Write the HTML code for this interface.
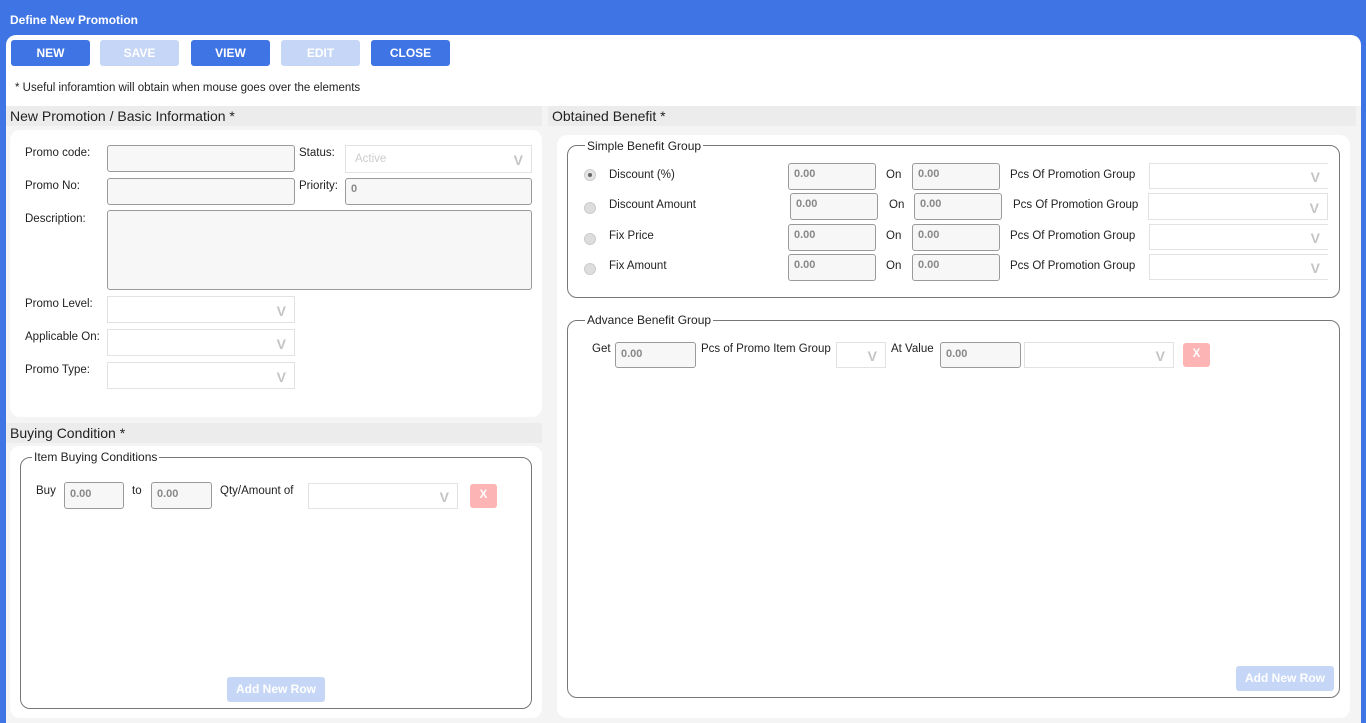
<!DOCTYPE html>
<html><head><meta charset="utf-8"><style>
*{box-sizing:border-box;margin:0;padding:0}
body{width:1366px;height:723px;background:#3f74e5;font-family:"Liberation Sans",sans-serif;font-size:11.5px;color:#222;position:relative;overflow:hidden}
.a{position:absolute}
.title{left:10px;top:13px;color:#fff;font-weight:bold;font-size:12px}
.main{left:6px;top:35px;width:1355px;height:688px;background:#fff;border-radius:10px 10px 0 0}
.gray{left:6px;top:100px;width:1355px;height:623px;background:#f4f4f4}
.btn{height:26px;width:79px;border-radius:3px;background:#3f74e5;color:#fff;font-weight:bold;font-size:12px;text-align:center;line-height:26px}
.dis{background:#c6d6f6}
.hdr{background:#ececec;height:20px;font-size:14px;line-height:20px;padding-left:4px;color:#222}
.panel{background:#fff;border-radius:10px}
.in{background:#f7f7f7;border:1px solid #9a9a9a;border-radius:3px;color:#888;font-weight:bold;font-size:11px;padding:4px 0 0 5px}
.sel{background:#fff;border:1px solid #e2e2e2;}
.sel:after{content:"V";position:absolute;right:8px;top:50%;transform:translateY(-45%);color:#c4c4c4;font-size:14px;font-weight:bold}
.fs{border:1px solid #777;border-radius:10px}
.lg{background:#fff;padding:0 2px;font-size:12px}
.x{background:#fdb4b4;color:#fff;font-weight:bold;border-radius:3px;text-align:center;line-height:23px;width:27px;height:24px}
.radio{width:12px;height:12px;border-radius:50%;background:#ddd;border:1px solid #ccc}
</style></head><body>
<div class="a title">Define New Promotion</div>
<div class="a main"></div>
<div class="a gray"></div>
<div class="a" style="left:6px;top:66px;width:1355px;height:40px;background:#fff"></div>
<div class="a btn" style="left:11px;top:40px">NEW</div>
<div class="a btn dis" style="left:100px;top:40px">SAVE</div>
<div class="a btn" style="left:191px;top:40px">VIEW</div>
<div class="a btn dis" style="left:281px;top:40px">EDIT</div>
<div class="a btn" style="left:371px;top:40px">CLOSE</div>
<div class="a" style="left:15px;top:82px;font-size:11.5px">* Useful inforamtion will obtain when mouse goes over the elements</div>

<div class="a hdr" style="left:6px;top:106px;width:536px">New Promotion / Basic Information *</div>
<div class="a panel" style="left:10px;top:130px;width:532px;height:287px"></div>
<div class="a" style="left:25px;top:147px">Promo code:</div>
<div class="a in" style="left:107px;top:145px;width:188px;height:27px"></div>
<div class="a" style="left:299px;top:147px">Status:</div>
<div class="a sel" style="left:345px;top:145px;width:187px;height:28px;color:#ccc;padding:7px 0 0 9px">Active</div>
<div class="a" style="left:25px;top:180px">Promo No:</div>
<div class="a in" style="left:107px;top:178px;width:188px;height:27px"></div>
<div class="a" style="left:299px;top:180px">Priority:</div>
<div class="a in" style="left:345px;top:178px;width:187px;height:27px">0</div>
<div class="a" style="left:25px;top:213px">Description:</div>
<div class="a in" style="left:107px;top:210px;width:425px;height:80px"></div>
<div class="a" style="left:25px;top:298px">Promo Level:</div>
<div class="a sel" style="left:107px;top:296px;width:188px;height:27px"></div>
<div class="a" style="left:25px;top:331px">Applicable On:</div>
<div class="a sel" style="left:107px;top:329px;width:188px;height:27px"></div>
<div class="a" style="left:25px;top:364px">Promo Type:</div>
<div class="a sel" style="left:107px;top:362px;width:188px;height:27px"></div>

<div class="a hdr" style="left:6px;top:423px;width:536px">Buying Condition *</div>
<div class="a panel" style="left:10px;top:446px;width:532px;height:272px"></div>
<div class="a fs" style="left:20px;top:457px;width:512px;height:252px"></div>
<div class="a lg" style="left:32px;top:450px">Item Buying Conditions</div>
<div class="a" style="left:36px;top:485px">Buy</div>
<div class="a in" style="left:64px;top:482px;width:60px;height:27px;padding-top:5px">0.00</div>
<div class="a" style="left:132px;top:485px">to</div>
<div class="a in" style="left:151px;top:482px;width:61px;height:27px;padding-top:5px">0.00</div>
<div class="a" style="left:220px;top:485px">Qty/Amount of</div>
<div class="a sel" style="left:308px;top:483px;width:150px;height:26px"></div>
<div class="a x" style="left:470px;top:484px">X</div>
<div class="a btn dis" style="left:227px;top:677px;width:98px;height:25px;line-height:25px">Add New Row</div>

<div class="a hdr" style="left:548px;top:106px;width:808px">Obtained Benefit *</div>
<div class="a panel" style="left:557px;top:135px;width:793px;height:583px"></div>
<div class="a fs" style="left:567px;top:145px;width:773px;height:153px"></div>
<div class="a lg" style="left:585px;top:139px">Simple Benefit Group</div>

<div class="a radio" style="left:584px;top:169px;background:#e4e4e4"><div style="width:4px;height:4px;background:#666;border-radius:50%;margin:3px"></div></div>
<div class="a" style="left:609px;top:169px">Discount (%)</div>
<div class="a in" style="left:788px;top:163px;width:88px;height:27px">0.00</div>
<div class="a" style="left:886px;top:169px">On</div>
<div class="a in" style="left:912px;top:163px;width:88px;height:27px">0.00</div>
<div class="a" style="left:1010px;top:169px">Pcs Of Promotion Group</div>
<div class="a sel" style="left:1149px;top:163px;width:179px;height:26px;border-right:none"></div>

<div class="a radio" style="left:584px;top:202px"></div>
<div class="a" style="left:609px;top:199px">Discount Amount</div>
<div class="a in" style="left:790px;top:193px;width:88px;height:27px">0.00</div>
<div class="a" style="left:889px;top:199px">On</div>
<div class="a in" style="left:914px;top:193px;width:88px;height:27px">0.00</div>
<div class="a" style="left:1013px;top:199px">Pcs Of Promotion Group</div>
<div class="a sel" style="left:1148px;top:193px;width:180px;height:27px"></div>

<div class="a radio" style="left:584px;top:233px"></div>
<div class="a" style="left:609px;top:230px">Fix Price</div>
<div class="a in" style="left:788px;top:224px;width:88px;height:27px">0.00</div>
<div class="a" style="left:886px;top:230px">On</div>
<div class="a in" style="left:912px;top:224px;width:88px;height:27px">0.00</div>
<div class="a" style="left:1010px;top:230px">Pcs Of Promotion Group</div>
<div class="a sel" style="left:1149px;top:224px;width:179px;height:26px;border-right:none"></div>

<div class="a radio" style="left:584px;top:263px"></div>
<div class="a" style="left:609px;top:260px">Fix Amount</div>
<div class="a in" style="left:788px;top:254px;width:88px;height:27px">0.00</div>
<div class="a" style="left:886px;top:260px">On</div>
<div class="a in" style="left:912px;top:254px;width:88px;height:27px">0.00</div>
<div class="a" style="left:1010px;top:260px">Pcs Of Promotion Group</div>
<div class="a sel" style="left:1149px;top:254px;width:179px;height:26px;border-right:none"></div>

<div class="a fs" style="left:567px;top:320px;width:773px;height:378px"></div>
<div class="a lg" style="left:585px;top:313px">Advance Benefit Group</div>
<div class="a" style="left:592px;top:343px">Get</div>
<div class="a in" style="left:615px;top:342px;width:81px;height:26px;padding-top:5px">0.00</div>
<div class="a" style="left:701px;top:343px">Pcs of Promo Item Group</div>
<div class="a sel" style="left:836px;top:342px;width:50px;height:26px"></div>
<div class="a" style="left:891px;top:343px">At Value</div>
<div class="a in" style="left:940px;top:342px;width:81px;height:26px;padding-top:5px">0.00</div>
<div class="a sel" style="left:1024px;top:342px;width:150px;height:26px"></div>
<div class="a x" style="left:1183px;top:343px">X</div>
<div class="a btn dis" style="left:1236px;top:666px;width:98px;height:25px;line-height:25px">Add New Row</div>
</body></html>
